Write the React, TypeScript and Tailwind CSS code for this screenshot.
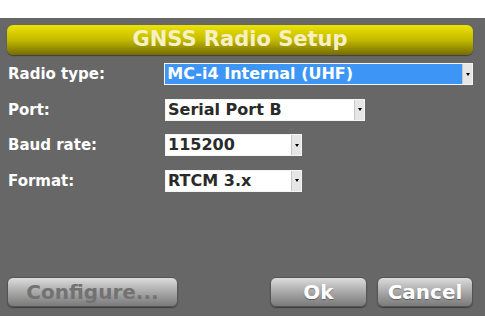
const font = { fontFamily: '"DejaVu Sans", "Liberation Sans", sans-serif' };

type Field = { label: string; value: string; width: string; active?: boolean };

const fields: Field[] = [
  { label: "Radio type:", value: "MC-i4 Internal (UHF)", width: "w-[310px]", active: true },
  { label: "Port:", value: "Serial Port B", width: "w-[200px]" },
  { label: "Baud rate:", value: "115200", width: "w-[137px]" },
  { label: "Format:", value: "RTCM 3.x", width: "w-[137px]" },
];

const Select = ({ field }: { field: Field }) => (
  <div
    className={`flex h-[22px] ${field.width} items-stretch border border-[#f4f4f4] ${
      field.active ? "bg-[#3d96f5] text-white" : "bg-white text-[#2a2a2a]"
    }`}
  >
    <div className="flex flex-1 items-center overflow-hidden whitespace-nowrap pl-[2px] text-[16px] font-bold leading-none">
      {field.value}
    </div>
    <div className="flex w-[10px] items-center justify-center border-l border-[#c8c8c8] bg-[#e6e6e6]">
      <div className="h-0 w-0 border-x-[2px] border-t-[3px] border-x-transparent border-t-black" />
    </div>
  </div>
);

const Button = ({ label, disabled, width }: { label: string; disabled?: boolean; width: string }) => (
  <div
    className={`flex h-[30px] ${width} items-center justify-center rounded-[6px] border border-[#555] bg-gradient-to-b from-[#dcdcdc] via-[#a9a9a9] to-[#7a7a7a] text-[20px] font-bold shadow-[0_1px_1px_rgba(0,0,0,0.4)] ${
      disabled ? "text-[#727272]" : "text-white [text-shadow:0_1px_1px_rgba(0,0,0,0.35)]"
    }`}
  >
    {label}
  </div>
);

export default function App() {
  return (
    <div className="h-[334px] w-[485px] bg-white pt-[18px]" style={font}>
      <div className="flex h-[298px] flex-col bg-[#676767] pl-[7px] pr-[12px] pt-[7px]">
        <div className="flex h-[30px] items-center justify-center rounded-[6px] bg-gradient-to-b from-[#ece400] via-[#c4ba00] to-[#746c00] text-[21px] font-bold text-[#f6f1c4] shadow-[0_1px_1px_rgba(0,0,0,0.4)]">
          GNSS Radio Setup
        </div>
        <div className="mt-[8px] flex flex-col gap-[13px]">
          {fields.map((f) => (
            <div key={f.label} className="flex items-center">
              <div className="w-[158px] pl-[1px] text-[15px] font-bold text-white">{f.label}</div>
              <Select field={f} />
            </div>
          ))}
        </div>
        <div className="mt-auto mb-[9px] flex items-center">
          <Button label="Configure..." disabled width="w-[171px]" />
          <div className="flex-1" />
          <Button label="Ok" width="w-[97px]" />
          <div className="w-[10px]" />
          <Button label="Cancel" width="w-[96px]" />
        </div>
      </div>
    </div>
  );
}
